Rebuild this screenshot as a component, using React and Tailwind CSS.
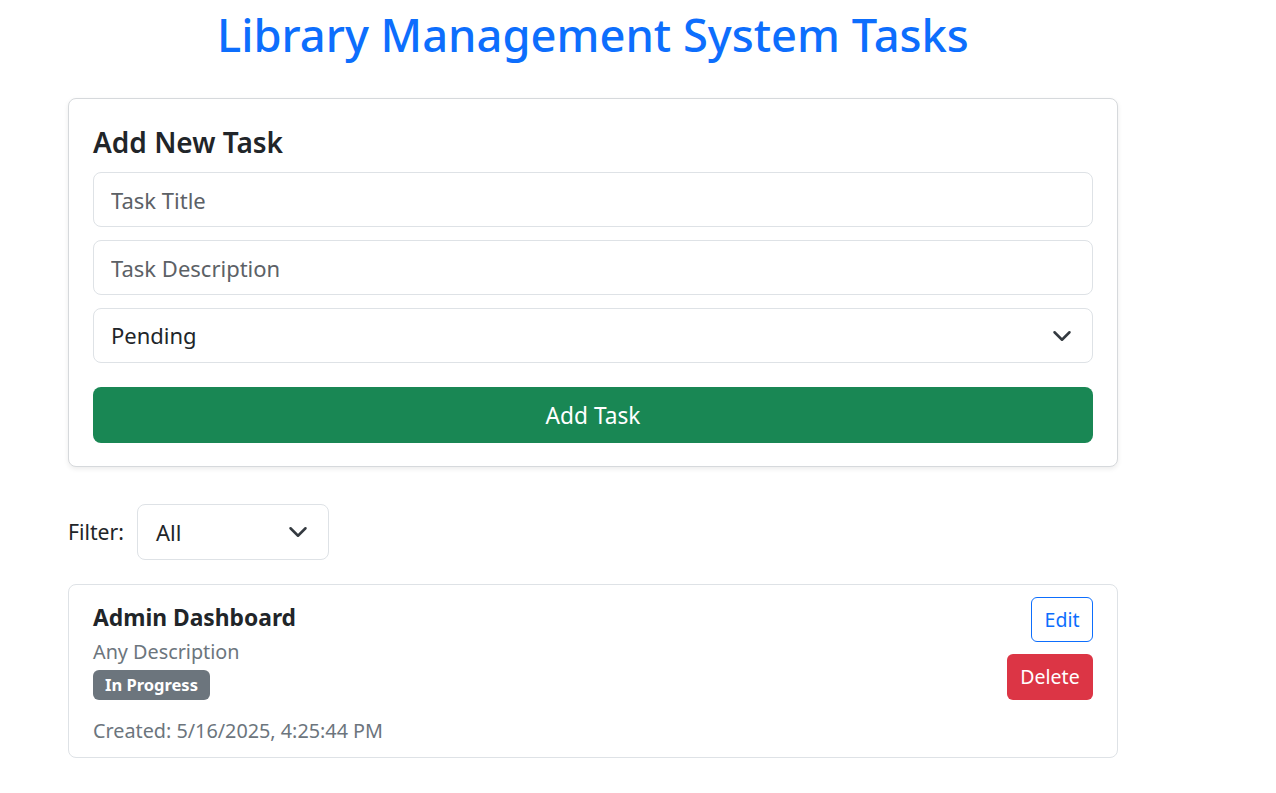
import React from "react";

function Chevron() {
  return (
    <svg width="20" height="20" viewBox="0 0 16 16" fill="none" className="shrink-0">
      <path d="m2 5 6 6 6-6" stroke="#343a40" strokeWidth="2" strokeLinecap="round" strokeLinejoin="round" />
    </svg>
  );
}

export default function App() {
  return (
    <div className="min-h-screen bg-white text-[#212529] font-['Noto_Sans',sans-serif]">
      <div className="w-[1050px] ml-[68px]">
        <h1 className="pt-[7px] text-center text-[45.3px] leading-[56px] font-medium text-[#0d6efd]">
          Library Management System Tasks
        </h1>

        <div className="mt-[35px] rounded-[8px] border border-[#d6d9dc] bg-white px-[24px] pt-[26px] pb-[23px] shadow-[0_2px_5px_rgba(0,0,0,0.08)]">
          <h4 className="mb-[13px] text-[28px] leading-[34px] font-semibold text-[#212529]">Add New Task</h4>
          <input
            className="mb-[13px] block h-[55px] w-full rounded-[8px] border border-[#dee2e6] pl-[17px] text-[22px] text-[#212529] outline-none placeholder:text-[#5c6166]"
            placeholder="Task Title"
          />
          <input
            className="mb-[13px] block h-[55px] w-full rounded-[8px] border border-[#dee2e6] pl-[17px] text-[22px] text-[#212529] outline-none placeholder:text-[#5c6166]"
            placeholder="Task Description"
          />
          <div className="flex h-[55px] w-full items-center justify-between rounded-[8px] border border-[#dee2e6] pl-[17px] pr-[20px] text-[22px] text-[#212529]">
            <span>Pending</span>
            <Chevron />
          </div>
          <button className="mt-[24px] flex h-[56px] w-full items-center justify-center rounded-[8px] bg-[#198754] pt-[3px] text-[22.7px] text-white">
            Add Task
          </button>
        </div>

        <div className="mt-[37px] flex items-center gap-[13px]">
          <span className="text-[21.2px] text-[#212529]">Filter:</span>
          <div className="flex h-[56px] w-[192px] items-center justify-between rounded-[8px] border border-[#dee2e6] pl-[18px] pr-[20px] text-[22px] text-[#212529]">
            <span>All</span>
            <Chevron />
          </div>
        </div>

        <div className="mt-[24px] flex items-start justify-between rounded-[8px] border border-[#dee2e6] px-[24px] pt-[12px] pb-[11px]">
          <div className="pt-[6px]">
            <div className="text-[22.8px] leading-[29px] font-bold text-[#212529]">Admin Dashboard</div>
            <div className="mt-[5px] text-[19.8px] leading-[30px] text-[#6c757d]">Any Description</div>
            <div className="mt-[3px] inline-flex h-[30px] items-center rounded-[6px] bg-[#6c757d] px-[12px] text-[16.5px] font-bold text-white">
              In Progress
            </div>
            <div className="mt-[16px] text-[19.8px] leading-[30px] text-[#6c757d]">Created: 5/16/2025, 4:25:44 PM</div>
          </div>
          <div className="flex flex-col items-end gap-[12px]">
            <button className="flex h-[45px] w-[62px] items-center justify-center rounded-[6px] border border-[#0d6efd] text-[19.5px] text-[#0d6efd]">
              Edit
            </button>
            <button className="flex h-[46px] w-[86px] items-center justify-center rounded-[6px] bg-[#dc3545] text-[19.5px] text-white">
              Delete
            </button>
          </div>
        </div>
      </div>
    </div>
  );
}
